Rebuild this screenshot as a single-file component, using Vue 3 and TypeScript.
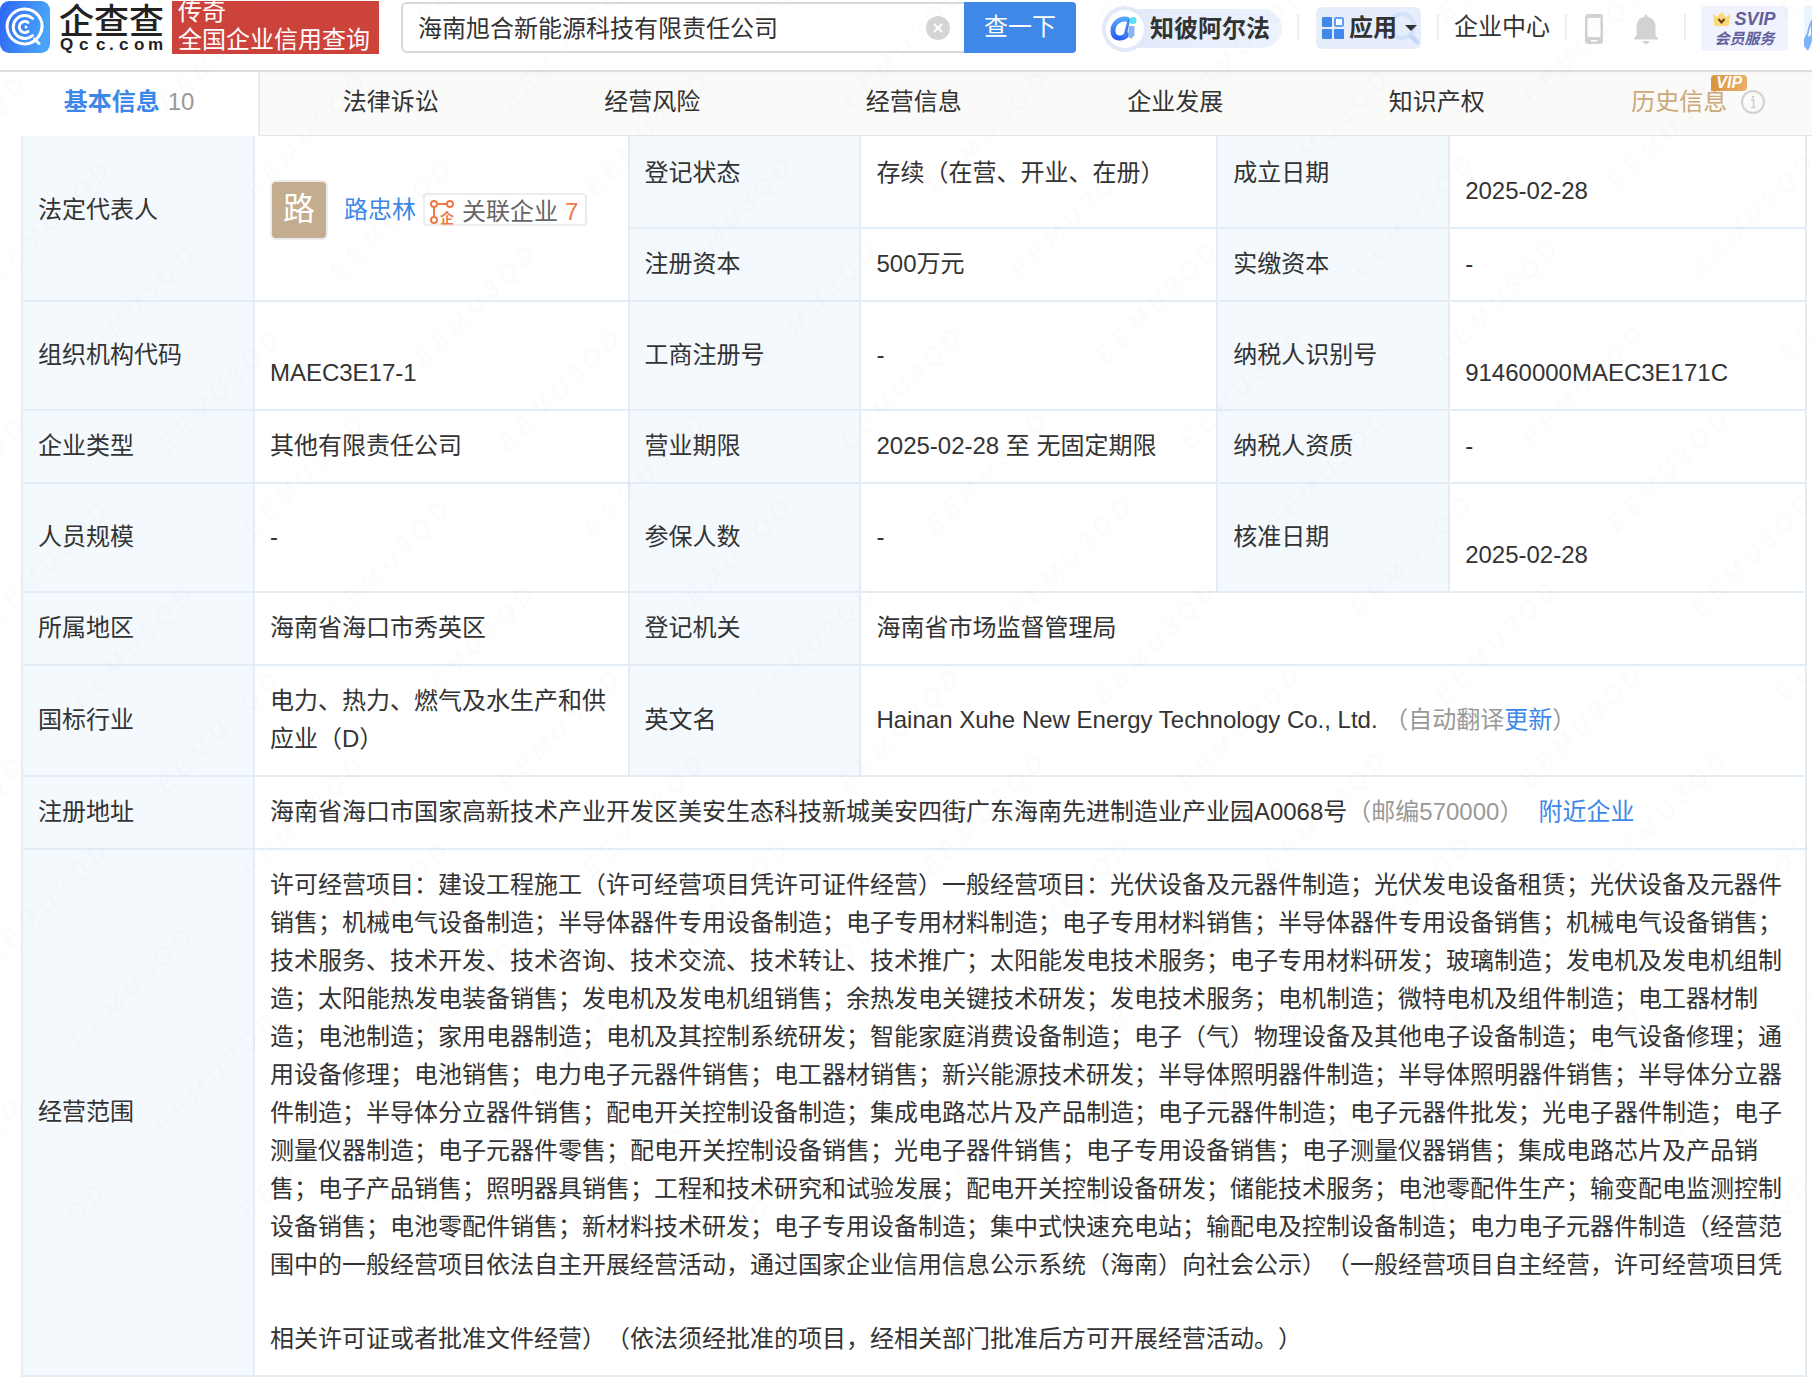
<script setup lang="ts">
import { ref } from 'vue'

interface Cell {
  kind: 'label' | 'value' | 'person' | 'english' | 'address'
  text: string
  rows?: number
  cols?: number
  low?: boolean
}

const keyword = ref('海南旭合新能源科技有限责任公司')
const tabs = ['法律诉讼', '经营风险', '经营信息', '企业发展', '知识产权']

const label = (text: string, rows = 1): Cell => ({ kind: 'label', text, rows })
const value = (text: string, cols = 1): Cell => ({ kind: 'value', text, cols })
const low = (text: string): Cell => ({ kind: 'value', text, low: true })

const rows: Cell[][] = [
  [
    label('法定代表人', 2),
    { kind: 'person', text: '路忠林', rows: 2 },
    label('登记状态'),
    value('存续（在营、开业、在册）'),
    label('成立日期'),
    low('2025-02-28'),
  ],
  [label('注册资本'), value('500万元'), label('实缴资本'), value('-')],
  [label('组织机构代码'), low('MAEC3E17-1'), label('工商注册号'), value('-'), label('纳税人识别号'), low('91460000MAEC3E171C')],
  [label('企业类型'), value('其他有限责任公司'), label('营业期限'), value('2025-02-28 至 无固定期限'), label('纳税人资质'), value('-')],
  [label('人员规模'), value('-'), label('参保人数'), value('-'), label('核准日期'), low('2025-02-28')],
  [label('所属地区'), value('海南省海口市秀英区'), label('登记机关'), value('海南省市场监督管理局', 3)],
  [
    label('国标行业'),
    value('电力、热力、燃气及水生产和供应业（D）'),
    label('英文名'),
    { kind: 'english', text: 'Hainan Xuhe New Energy Technology Co., Ltd.', cols: 3 },
  ],
  [
    label('注册地址'),
    { kind: 'address', text: '海南省海口市国家高新技术产业开发区美安生态科技新城美安四街广东海南先进制造业产业园A0068号', cols: 5 },
  ],
]

const scope =
  '许可经营项目：建设工程施工（许可经营项目凭许可证件经营）一般经营项目：光伏设备及元器件制造；光伏发电设备租赁；光伏设备及元器件销售；机械电气设备制造；半导体器件专用设备制造；电子专用材料制造；电子专用材料销售；半导体器件专用设备销售；机械电气设备销售；技术服务、技术开发、技术咨询、技术交流、技术转让、技术推广；太阳能发电技术服务；电子专用材料研发；玻璃制造；发电机及发电机组制造；太阳能热发电装备销售；发电机及发电机组销售；余热发电关键技术研发；发电技术服务；电机制造；微特电机及组件制造；电工器材制造；电池制造；家用电器制造；电机及其控制系统研发；智能家庭消费设备制造；电子（气）物理设备及其他电子设备制造；电气设备修理；通用设备修理；电池销售；电力电子元器件销售；电工器材销售；新兴能源技术研发；半导体照明器件制造；半导体照明器件销售；半导体分立器件制造；半导体分立器件销售；配电开关控制设备制造；集成电路芯片及产品制造；电子元器件制造；电子元器件批发；光电子器件制造；电子测量仪器制造；电子元器件零售；配电开关控制设备销售；光电子器件销售；电子专用设备销售；电子测量仪器销售；集成电路芯片及产品销售；电子产品销售；照明器具销售；工程和技术研究和试验发展；配电开关控制设备研发；储能技术服务；电池零配件生产；输变配电监测控制设备销售；电池零配件销售；新材料技术研发；电子专用设备制造；集中式快速充电站；输配电及控制设备制造；电力电子元器件制造（经营范围中的一般经营项目依法自主开展经营活动，通过国家企业信用信息公示系统（海南）向社会公示）（一般经营项目自主经营，许可经营项目凭'
const scopeEnd = '相关许可证或者批准文件经营）（依法须经批准的项目，经相关部门批准后方可开展经营活动。）'
</script>

<template>
  <div class="page">
    <header class="top">
      <a href="#" class="brand" aria-label="企查查">
        <svg class="mark" viewBox="0 0 50 52" aria-hidden="true">
          <defs>
            <linearGradient id="markFill" x1="0" y1="0" x2="1" y2="0.2">
              <stop offset="0" stop-color="#2f66f4" />
              <stop offset="1" stop-color="#48a4f8" />
            </linearGradient>
          </defs>
          <rect width="50" height="52" rx="9" fill="url(#markFill)" />
          <g fill="none" stroke="#fff" stroke-width="3" stroke-linecap="round">
            <path d="M35 39.500A17.500 17.500 0 1 1 41.500 30" />
            <path d="M41.800 27a17.500 17.500 0 0 1-5.500 11" />
            <path d="M34.500 38l4.500 4.500" />
            <path d="M32.500 17.500A11.500 11.500 0 1 0 32.500 34.500" />
            <path d="M28 21.500A5.500 5.500 0 1 0 28 30.500" />
          </g>
          <circle cx="26" cy="26" r="1.500" fill="#fff" />
        </svg>
        <span class="wordmark">
          <span class="word-cn">企查查</span>
          <svg class="word-en" viewBox="0 0 104 16" aria-label="Qcc.com">
            <text x="1 20 37 50 60 75 89" y="13">Qcc.com</text>
          </svg>
        </span>
      </a>
      <div class="slogan">
        <span>传奇</span>
        <span>全国企业信用查询</span>
      </div>

      <form class="search" @submit.prevent>
        <div class="field">
          <input v-model="keyword" type="text" aria-label="企业名称" />
          <button type="button" class="clear" aria-label="清空" @click="keyword = ''">
            <svg viewBox="0 0 24 24" aria-hidden="true">
              <circle cx="12" cy="12" r="12" fill="#d5d5d5" />
              <path d="M8 8l8 8M16 8l-8 8" stroke="#fff" stroke-width="2" />
            </svg>
          </button>
        </div>
        <button type="submit" class="go">查一下</button>
      </form>

      <a href="#" class="alpha">
        <svg viewBox="0 0 46 46" aria-hidden="true">
          <defs>
            <linearGradient id="alphaFill" x1="0" y1="0" x2="0" y2="1">
              <stop offset="0" stop-color="#56a5f8" />
              <stop offset="1" stop-color="#2a62f2" />
            </linearGradient>
          </defs>
          <circle cx="23" cy="23" r="23" fill="#e2eafa" />
          <circle cx="23" cy="23" r="19" fill="#fff" />
          <path d="M26.500 13.500C17 11.500 10.500 18 11 25.500C11.500 33.500 21 34.500 26.500 27" fill="none" stroke="url(#alphaFill)" stroke-width="5" />
          <path d="M26 13l2.500-1-4 18.500-4 2z" fill="#3f80f5" />
          <path d="M27 20h5.500v9l-3 4-3.500-2.500z" fill="#8eb4f5" />
          <circle cx="31" cy="14.500" r="3.500" fill="#5be0f5" />
        </svg>
        <span>知彼阿尔法</span>
      </a>
      <i class="rule" />
      <button type="button" class="apps">
        <svg class="lens" viewBox="0 0 34 36" aria-hidden="true">
          <circle cx="15" cy="15" r="12" fill="none" stroke="#d3e1f9" stroke-width="4" />
          <path d="M24 25l6 6" stroke="#c6d9f8" stroke-width="5" stroke-linecap="round" />
        </svg>
        <svg class="grid" viewBox="0 0 22 22" aria-hidden="true">
          <rect width="10" height="10" rx="1" fill="#4088ea" />
          <rect x="13" y="1" width="8" height="8" rx="1" fill="#fff" stroke="#5e9df0" stroke-width="2" />
          <rect y="12" width="10" height="10" rx="1" fill="#4088ea" />
          <rect x="12" y="12" width="10" height="10" rx="1" fill="#4088ea" />
        </svg>
        <span>应用</span>
        <i class="caret" />
      </button>
      <i class="rule" />
      <a href="#" class="center">企业中心</a>
      <i class="rule" />
      <button type="button" class="icon" aria-label="手机版">
        <svg viewBox="0 0 24 30" aria-hidden="true">
          <path fill-rule="evenodd" fill="#d2d2d2" d="M6 0h12a3 3 0 0 1 3 3v24a3 3 0 0 1-3 3H6a3 3 0 0 1-3-3V3a3 3 0 0 1 3-3zM5.500 4v19h13V4zM9 26v1.500h6V26z" />
        </svg>
      </button>
      <button type="button" class="icon bell" aria-label="消息">
        <svg viewBox="0 0 24 30" aria-hidden="true">
          <path fill="#d2d2d2" d="M10.500 2a1.500 1.500 0 0 1 3 0v1c5 .8 8 4.500 8 9.500v9l2.500 3V25.500H0V24.500l2.500-3v-9c0-5 3-8.700 8-9.500zM8.500 27h7q-.8 3-3.500 3t-3.500-3z" />
        </svg>
      </button>
      <i class="rule" />
      <a href="#" class="svip">
        <span class="svip-top">
          <svg viewBox="0 0 17 14" aria-hidden="true">
            <path d="M0 2l4 3 4.500-5L13 5l4-3-1 11q0 1-1 1H2q-1 0-1-1z" fill="#f9d978" />
            <path d="M5.500 7l3 3.500 3-3.500" fill="none" stroke="#6b3a14" stroke-width="2" />
          </svg>
          SVIP
        </span>
        <span class="svip-bottom">会员服务</span>
      </a>
      <svg class="peek" viewBox="0 0 8 46" aria-hidden="true">
        <path d="M8 0H4Q0 0 0 5v38h8z" fill="#ecf4fe" />
        <path d="M8 14Q5 18 3 28l-3 6v7l4 5 4-10z" fill="#7fb2f8" />
        <path d="M7 21v9l-3 2q1-7 3-11z" fill="#fff" />
      </svg>
    </header>

    <nav class="tabs">
      <div class="strip">
        <a href="#" class="tab active"><b>基本信息</b> <span>10</span></a>
        <a v-for="t in tabs" :key="t" href="#" class="tab">{{ t }}</a>
        <a href="#" class="tab history">
          <span class="history-text">历史信息<em class="vip">VIP</em></span>
          <svg viewBox="0 0 24 24" aria-hidden="true">
            <circle cx="12" cy="12" r="11" fill="none" stroke="#d2d2d2" stroke-width="2" />
            <path d="M10 10h2.500v7.500M10 17.500h5" fill="none" stroke="#cfcfcf" stroke-width="1.500" />
            <circle cx="12" cy="7" r="1.300" fill="#cfcfcf" />
          </svg>
        </a>
      </div>
    </nav>

    <main>
      <table>
        <colgroup>
          <col class="c-label" /><col class="c-wide" />
          <col class="c-label" /><col class="c-mid" />
          <col class="c-label" /><col class="c-mid" />
        </colgroup>
        <tbody>
          <tr v-for="(row, r) in rows" :key="r">
            <template v-for="(cell, c) in row" :key="c">
              <th v-if="cell.kind === 'label'" scope="row" :rowspan="cell.rows">{{ cell.text }}</th>
              <td v-else :rowspan="cell.rows" :colspan="cell.cols" :class="{ low: cell.low }">
                <div v-if="cell.kind === 'person'" class="person">
                  <span class="avatar">路</span>
                  <a href="#" class="name">{{ cell.text }}</a>
                  <a href="#" class="related">
                    <svg viewBox="0 0 24 24" aria-hidden="true">
                      <g fill="none" stroke="#ee7a48" stroke-width="2">
                        <circle cx="4" cy="4" r="3" />
                        <circle cx="20" cy="4" r="3" />
                        <circle cx="4" cy="20" r="3" />
                        <path d="M7 4h10M4 7v10" />
                      </g>
                      <text x="10" y="23">企</text>
                    </svg>
                    <span>关联企业</span>
                    <b>7</b>
                  </a>
                </div>
                <template v-else-if="cell.kind === 'english'">
                  {{ cell.text }} <span class="muted">（自动翻译<a href="#">更新</a>）</span>
                </template>
                <template v-else-if="cell.kind === 'address'">
                  {{ cell.text }}<span class="muted">（邮编570000）</span><a href="#" class="nearby">附近企业</a>
                </template>
                <template v-else>{{ cell.text }}</template>
              </td>
            </template>
          </tr>
          <tr>
            <th scope="row">经营范围</th>
            <td colspan="5">
              <p>{{ scope }}</p>
              <p class="tail">{{ scopeEnd }}</p>
            </td>
          </tr>
        </tbody>
      </table>
    </main>

    <svg class="watermark" aria-hidden="true">
      <defs>
        <pattern id="wm" width="242" height="120" patternUnits="userSpaceOnUse" patternTransform="rotate(-45)">
          <text x="40" y="80">E E M U 3 Q D</text>
        </pattern>
      </defs>
      <rect width="100%" height="100%" fill="url(#wm)" />
    </svg>
  </div>
</template>

<style>
body {
  margin: 0;
  background: #fff;
}
</style>

<style scoped>
* {
  box-sizing: border-box;
}
.page {
  position: relative;
  overflow: hidden;
  font-family: "Liberation Sans", "Noto Sans CJK SC", sans-serif;
  font-size: 24px;
  line-height: 38px;
  color: #333;
  text-spacing-trim: space-all;
}
a {
  color: #3d87e9;
  text-decoration: none;
}
button {
  border: 0;
  padding: 0;
  background: none;
  font: inherit;
  color: inherit;
  cursor: pointer;
}
svg {
  display: block;
  flex: none;
}

.top {
  display: flex;
  align-items: flex-start;
  height: 72px;
  border-bottom: 2px solid #dcdcdc;
  white-space: nowrap;
}
.top > * {
  flex: none;
}
.brand {
  display: flex;
  gap: 9px;
  width: 172px;
  padding-top: 1px;
  color: #222;
}
.mark {
  width: 50px;
  height: 52px;
}
.wordmark {
  display: block;
}
.word-cn {
  display: block;
  font-family: "Noto Sans CJK SC", sans-serif;
  font-size: 35px;
  font-weight: 500;
  line-height: 36px;
}
.word-en {
  width: 104px;
  height: 16px;
  font-size: 17px;
  font-weight: 700;
  fill: #222;
}
.slogan {
  display: flex;
  flex-direction: column;
  justify-content: flex-end;
  width: 207px;
  height: 53px;
  margin-top: 1px;
  padding: 0 6px;
  overflow: hidden;
  background: #cc433c;
  color: #fff;
  line-height: 28px;
}
.slogan span {
  flex: none;
}
.top .search {
  display: flex;
  flex: 1 1 0;
  min-width: 0;
  height: 51px;
  margin: 2px 26px 0 22px;
}
.field {
  display: flex;
  flex: 1;
  align-items: center;
  min-width: 0;
  padding: 0 14px 0 15px;
  border: 2px solid #d9d9d9;
  border-right: 0;
  border-radius: 6px 0 0 6px;
}
.field input {
  flex: 1;
  min-width: 0;
  height: 44px;
  padding: 0 0 2px;
  border: 0;
  outline: 0;
  background: transparent;
  font: inherit;
  color: inherit;
}
.clear svg {
  width: 24px;
  height: 24px;
}
.go {
  width: 112px;
  padding-bottom: 2px;
  border-radius: 0 4px 4px 0;
  background: #4088e8;
  color: #fff;
}
.alpha {
  display: flex;
  align-items: center;
  gap: 2px;
  height: 39px;
  margin-top: 9px;
  padding-right: 12px;
  border-radius: 20px;
  background: linear-gradient(90deg, #e0e9fb, #edf3fd);
  color: #333;
  font-weight: 700;
}
.alpha svg {
  width: 46px;
  height: 46px;
}
.rule {
  width: 2px;
  height: 27px;
  margin: 14px 15px 0;
  background: #eee;
}
.apps {
  position: relative;
  display: flex;
  align-items: center;
  width: 105px;
  height: 42px;
  margin: 7px 1px 0 2px;
  padding-left: 6px;
  border-radius: 6px;
  background: #e7eefb;
  font-weight: 700;
}
.apps span {
  position: relative;
  margin: 0 8px 0 5px;
}
.grid {
  width: 22px;
  height: 22px;
}
.lens {
  position: absolute;
  right: 0;
  top: 4px;
  width: 34px;
  height: 36px;
}
.caret {
  position: relative;
  border: 6px solid transparent;
  border-top-color: #333;
  border-bottom: 0;
}
.center {
  margin-top: 8px;
  color: #333;
}
.icon {
  margin: 14px 2px 0 0;
}
.icon svg {
  width: 24px;
  height: 30px;
}
.bell {
  margin: 14px 11px 0 26px;
}
.svip {
  display: flex;
  flex-direction: column;
  align-items: center;
  justify-content: center;
  width: 87px;
  height: 45px;
  margin-top: 6px;
  border-radius: 4px;
  background: #f0f3fe;
  color: #62609c;
  font-weight: 700;
  font-style: italic;
}
.svip-top {
  display: flex;
  align-items: center;
  gap: 4px;
  font-size: 18px;
  line-height: 20px;
}
.svip-top svg {
  width: 17px;
  height: 14px;
}
.svip-bottom {
  font-size: 15px;
  line-height: 19px;
}
.peek {
  width: 8px;
  height: 46px;
  margin: 5px 0 0 16px;
}

.tabs {
  position: relative;
  z-index: 1;
  overflow: hidden;
}
.strip {
  display: flex;
  margin-right: -17px;
}
.tab {
  display: flex;
  flex: 1 1 0;
  align-items: center;
  justify-content: center;
  height: 64px;
  padding-bottom: 4px;
  border-bottom: 1px solid #e6e6e6;
  background: linear-gradient(#f6f6f6, #fafaf9 8px);
  color: #333;
}
.tab.active {
  flex: 0 0 260px;
  gap: 8px;
  border-right: 2px solid #eaeaea;
  border-bottom-color: #fff;
  background: #fff;
  color: #999;
}
.tab.active b {
  font-weight: 700;
  color: #3d87e9;
}
.history {
  gap: 14px;
  color: #cda878;
}
.history svg {
  width: 24px;
  height: 24px;
}
.history-text {
  position: relative;
}
.vip {
  position: absolute;
  right: -20px;
  top: -8px;
  width: 36px;
  height: 16px;
  border-radius: 4px 4px 4px 0;
  background: linear-gradient(90deg, #dc9440, #e8b068);
  color: #fff;
  font-size: 16px;
  font-weight: 700;
  line-height: 16px;
  text-align: center;
}

main {
  margin-top: -16px;
  padding: 0 5px 0 21px;
}
table {
  width: 100%;
  table-layout: fixed;
  border-collapse: separate;
  border-spacing: 0;
  border-right: 2px solid #e4edf6;
}
.c-label {
  width: 13%;
}
.c-wide {
  width: 21%;
}
.c-mid {
  width: 20%;
}
th,
td {
  padding: 16px 15px 17px;
  border: solid #e4edf6;
  border-width: 0 0 2px 2px;
  font-weight: 400;
  text-align: left;
  vertical-align: middle;
}
th {
  background: #f3f9fd;
}
td.low {
  padding-top: 52px;
}
p {
  margin: 0;
}
.tail {
  margin-top: 36px;
}
.person {
  display: flex;
  align-items: center;
  white-space: nowrap;
}
.avatar {
  width: 58px;
  height: 60px;
  border: 2px solid #ececec;
  border-radius: 6px;
  background: #c4ad8e;
  color: #fff;
  font-size: 32px;
  line-height: 54px;
  text-align: center;
}
.name {
  margin: 0 7px 0 16px;
}
.related {
  display: flex;
  align-items: center;
  height: 33px;
  padding: 4px 7px 0 5px;
  border: 2px solid #ececec;
  border-radius: 4px;
  color: #666;
}
.related svg {
  width: 24px;
  height: 24px;
  margin-right: 8px;
  overflow: visible;
}
.related text {
  fill: #ee7a48;
  font-size: 14px;
  font-weight: 700;
}
.related b {
  margin-left: 7px;
  color: #ee7a48;
  font-weight: 400;
}
.muted {
  color: #999;
}
.nearby {
  margin-left: 15px;
}

.watermark {
  position: absolute;
  inset: 0 0 160px;
  width: 100%;
  height: calc(100% - 160px);
  pointer-events: none;
  z-index: 2;
}
.watermark text {
  fill: #000;
  fill-opacity: 0.015;
  font-size: 24px;
  font-style: italic;
}
</style>
